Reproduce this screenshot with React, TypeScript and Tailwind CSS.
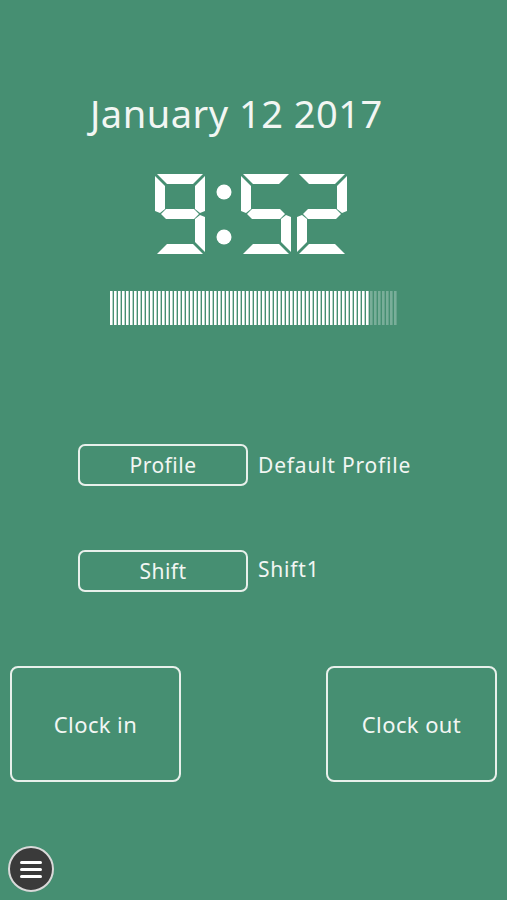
import * as React from "react"

// 7-segment glyph table: a b c d e f g
const SEGMENTS: Record<string, string[]> = {
  "2": ["a", "b", "g", "e", "d"],
  "5": ["a", "f", "g", "c", "d"],
  "9": ["a", "b", "c", "d", "f", "g"],
}

const SEG_POINTS: Record<string, string> = {
  a: "2,0 48,0 38,10 12,10",
  b: "40,12 50,2 50,37 45,39 40,35",
  c: "45,41 50,43 50,78 40,68 40,45",
  d: "12,70 38,70 48,80 2,80",
  e: "0,43 5,41 10,45 10,68 0,78",
  f: "0,2 10,12 10,35 5,39 0,37",
  g: "6,40 11,35 39,35 44,40 39,45 11,45",
}

function Digit({ value }: { value: string }) {
  const on = SEGMENTS[value] ?? []
  return (
    <svg width="50" height="80" viewBox="0 0 50 80" className="block">
      {on.map((s) => (
        <polygon key={s} points={SEG_POINTS[s]} fill="#ffffff" />
      ))}
    </svg>
  )
}

function Colon() {
  return (
    <svg width="18" height="80" viewBox="0 0 18 80" className="block">
      <circle cx="9" cy="18" r="7.5" fill="#ffffff" />
      <circle cx="9" cy="63" r="7.5" fill="#ffffff" />
    </svg>
  )
}

function Meter({ total = 72, filled = 65 }: { total?: number; filled?: number }) {
  const pitch = 4
  return (
    <svg width={total * pitch} height="34" viewBox={`0 0 ${total * pitch} 34`} className="block">
      {Array.from({ length: total }).map((_, i) => (
        <rect
          key={i}
          x={i * pitch}
          y="0"
          width="2.6"
          height="34"
          fill="#ffffff"
          opacity={i < filled ? 1 : 0.28}
        />
      ))}
    </svg>
  )
}

function MenuButton() {
  return (
    <button className="w-[46px] h-[46px] rounded-full bg-[#3a3a3a] border-2 border-[#d9d9d9] flex flex-col items-center justify-center gap-[4px]">
      <span className="block w-[22px] h-[3px] rounded-full bg-white" />
      <span className="block w-[22px] h-[3px] rounded-full bg-white" />
      <span className="block w-[22px] h-[3px] rounded-full bg-white" />
    </button>
  )
}

export default function App() {
  return (
    <div
      className="w-full h-[900px] bg-[#468f72] text-[#f2f6f3] flex flex-col overflow-hidden"
      style={{ fontFamily: '"Noto Sans", "Open Sans", sans-serif' }}
    >
      {/* Date */}
      <div className="pt-[87px] pl-[90px] text-[38px] leading-[52px] tracking-[0.5px]">
        January 12 2017
      </div>

      {/* Time */}
      <div className="mt-[35px] pl-[155px] flex items-start">
        <Digit value="9" />
        <div className="ml-[10px]">
          <Colon />
        </div>
        <div className="ml-[8px]">
          <Digit value="5" />
        </div>
        <div className="ml-[6px]">
          <Digit value="2" />
        </div>
      </div>

      {/* Progress meter */}
      <div className="mt-[37px] pl-[110px]">
        <Meter />
      </div>

      {/* Profile */}
      <div className="mt-[119px] pl-[78px] flex items-center gap-[10px]">
        <button className="w-[170px] h-[42px] rounded-[7px] border-2 border-[#e8f0eb] text-[21px] tracking-[0.5px] leading-none flex items-center justify-center">
          Profile
        </button>
        <span className="text-[21px] tracking-[0.8px] leading-none">Default Profile</span>
      </div>

      {/* Shift */}
      <div className="mt-[64px] pl-[78px] flex items-center gap-[10px]">
        <button className="w-[170px] h-[42px] rounded-[7px] border-2 border-[#e8f0eb] text-[21px] tracking-[0.5px] leading-none flex items-center justify-center">
          Shift
        </button>
        <span className="text-[21px] tracking-[0.8px] leading-none -mt-[4px]">Shift1</span>
      </div>

      {/* Clock in / out */}
      <div className="mt-[74px] px-[10px] flex justify-between">
        <button className="w-[171px] h-[116px] rounded-[8px] border-2 border-[#e8f0eb] text-[22px] tracking-[0.4px] flex items-center justify-center">
          Clock in
        </button>
        <button className="w-[171px] h-[116px] rounded-[8px] border-2 border-[#e8f0eb] text-[22px] tracking-[0.4px] flex items-center justify-center">
          Clock out
        </button>
      </div>

      {/* Menu */}
      <div className="mt-auto pl-[8px] pb-[8px]">
        <MenuButton />
      </div>
    </div>
  )
}
